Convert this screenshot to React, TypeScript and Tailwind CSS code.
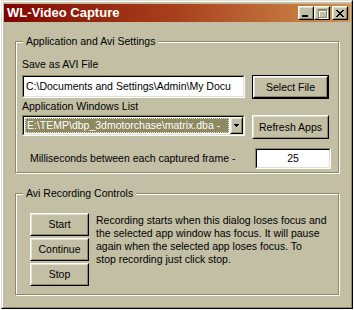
import React from "react";

// Windows classic "Brick" colours
const FACE = "bg-[#c2bfa5]";

function Raised({ children, className = "" }: { children?: React.ReactNode; className?: string }) {
  return (
    <div className={`border border-t-white border-l-white border-r-black border-b-black ${FACE} ${className}`}>
      <div className="flex h-full w-full items-center justify-center border border-t-[#e1e0d2] border-l-[#e1e0d2] border-r-[#8d8961] border-b-[#8d8961]">
        {children}
      </div>
    </div>
  );
}

function Sunken({ children, className = "" }: { children?: React.ReactNode; className?: string }) {
  return (
    <div className={`border border-t-[#8d8961] border-l-[#8d8961] border-r-white border-b-white ${className}`}>
      <div className="h-full w-full overflow-hidden border border-t-black border-l-black border-r-[#e1e0d2] border-b-[#e1e0d2] bg-white">
        {children}
      </div>
    </div>
  );
}

function GroupBox({ title, className = "", children }: { title: string; className?: string; children?: React.ReactNode }) {
  return (
    <div className={`relative border border-[#8d8961] shadow-[1px_1px_0_#fff,inset_1px_1px_0_#fff] ${className}`}>
      <div className={`absolute -top-[7px] left-[7px] px-[3px] leading-[13px] ${FACE}`}>{title}</div>
      {children}
    </div>
  );
}

export default function App() {
  return (
    <div className="h-[310px] w-[354px] bg-white font-['Liberation_Sans',Arial,sans-serif] text-[10.5px] leading-[13px] text-black">
      <div className="ml-[1px] h-[309px] w-[352px] border border-t-[#e1e0d2] border-l-[#e1e0d2] border-r-black border-b-black">
        <div className={`h-full w-full border border-t-white border-l-white border-r-[#8d8961] border-b-[#8d8961] px-[1px] pt-[2px] ${FACE}`}>
          {/* title bar */}
          <div className="flex h-[18px] items-center justify-between bg-linear-to-r from-[#800000] via-[#a8401c] to-[#d0904f] pl-[3px] pr-[2px]">
            <span className="text-[13px] font-bold leading-[16px] text-white">WL-Video Capture</span>
            <div className="flex items-center">
              <Raised className="h-[14px] w-[16px]">
                <div className="mt-[6px] mr-[2px] h-[2px] w-[6px] bg-black" />
              </Raised>
              <Raised className="h-[14px] w-[16px]">
                <div className="relative h-[9px] w-[9px]">
                  <div className="absolute left-[1px] top-[1px] h-[9px] w-[9px] border border-t-2 border-white" />
                  <div className="absolute left-0 top-0 h-[9px] w-[9px] border border-t-2 border-[#8d8961]" />
                </div>
              </Raised>
              <Raised className="ml-[2px] h-[14px] w-[16px]">
                <svg width="8" height="7" viewBox="0 0 8 7" shapeRendering="crispEdges">
                  <path d="M0 0h2v1h-2zM6 0h2v1h-2zM1 1h2v1h-2zM5 1h2v1h-2zM2 2h4v1h-4zM3 3h2v1h-2zM2 4h4v1h-4zM1 5h2v1h-2zM5 5h2v1h-2zM0 6h2v1h-2zM6 6h2v1h-2z" fill="#000" />
                </svg>
              </Raised>
            </div>
          </div>

          <div className="px-[11px]">
            {/* settings group */}
            <GroupBox title="Application and Avi Settings" className="mt-[19px] h-[132px] pl-[6px] pr-[7px] pt-[16px]">
              <div>Save as AVI File</div>
              <div className="mt-[4px] flex items-start gap-[7px]">
                <Sunken className="h-[23px] w-[223px]">
                  <div className="whitespace-nowrap pl-[2px] pt-[3px]">C:\Documents and Settings\Admin\My Docu</div>
                </Sunken>
                <div className="h-[24px] w-[77px] border border-black">
                  <Raised className="h-full w-full">Select File</Raised>
                </div>
              </div>
              <div className="mt-[1px]">Application Windows List</div>
              <div className="mt-[2px] flex items-start gap-[7px]">
                <Sunken className="h-[21px] w-[223px]">
                  <div className="flex h-full">
                    <div className="m-[1px] flex-1 overflow-hidden border border-dotted border-[#e1e0d2] bg-[#8d8961] pl-[1px] leading-[13px] whitespace-nowrap text-white">
                      E:\TEMP\dbp_3dmotorchase\matrix.dba -
                    </div>
                    <Raised className="h-full w-[13px]">
                      <svg width="5" height="3" viewBox="0 0 5 3" shapeRendering="crispEdges">
                        <path d="M0 0h5v1h-5zM1 1h3v1h-3zM2 2h1v1h-1z" fill="#000" />
                      </svg>
                    </Raised>
                  </div>
                </Sunken>
                <Raised className="h-[24px] w-[77px]">Refresh Apps</Raised>
              </div>
              <div className="mt-[9px] flex items-center justify-between">
                <span className="pl-[8px]">Milliseconds between each captured frame -</span>
                <Sunken className="h-[21px] w-[76px]">
                  <div className="pt-[2px] text-center">25</div>
                </Sunken>
              </div>
            </GroupBox>

            {/* recording group */}
            <GroupBox title="Avi Recording Controls" className="mt-[20px] flex h-[102px] gap-[7px] pl-[14px] pt-[19px]">
              <div className="flex flex-col gap-[2px]">
                <Raised className="h-[23px] w-[59px]">Start</Raised>
                <Raised className="h-[23px] w-[59px]">Continue</Raised>
                <Raised className="h-[23px] w-[59px]">Stop</Raised>
              </div>
              <p className="whitespace-nowrap pt-[1px]">
                Recording starts when this dialog loses focus and
                <br />
                the selected app window has focus. It will pause
                <br />
                again when the selected app loses focus. To
                <br />
                stop recording just click stop.
              </p>
            </GroupBox>
          </div>
        </div>
      </div>
    </div>
  );
}
